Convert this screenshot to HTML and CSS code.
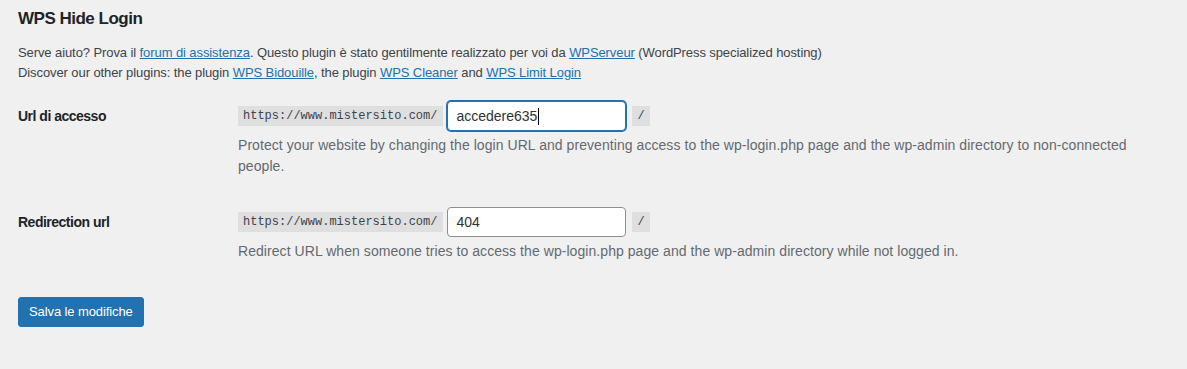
FILE: index.html
```html
<!DOCTYPE html>
<html>
<head>
    <title>WPS Hide Login</title>
    <link rel="stylesheet" href="styles.css">
</head>
<body>
    <div class="wrap">
        <h2>WPS Hide Login</h2>
        <p class="intro">
            Serve aiuto? Prova il <a href="#">forum di assistenza</a>. Questo plugin è stato gentilmente realizzato per voi da <a href="#">WPServeur</a> (WordPress specialized hosting)<br>
            Discover our other plugins: the plugin <a href="#">WPS Bidouille</a>, the plugin <a href="#">WPS Cleaner</a> and <a href="#">WPS Limit Login</a>
        </p>

        <table class="form-table">
            <tr>
                <th>Url di accesso</th>
                <td>
                    <div class="url-field">
                        <code>https://www.mistersito.com/</code>
                        <div class="text-input focused">accedere635<span class="caret"></span></div>
                        <code class="slash">/</code>
                    </div>
                    <p class="description">Protect your website by changing the login URL and preventing access to the wp-login.php page and the wp-admin directory to non-connected people.</p>
                </td>
            </tr>
            <tr>
                <th>Redirection url</th>
                <td>
                    <div class="url-field">
                        <code>https://www.mistersito.com/</code>
                        <div class="text-input">404</div>
                        <code class="slash">/</code>
                    </div>
                    <p class="description">Redirect URL when someone tries to access the wp-login.php page and the wp-admin directory while not logged in.</p>
                </td>
            </tr>
        </table>

        <p class="submit">
            <button class="button-primary">Salva le modifiche</button>
        </p>
    </div>
</body>
</html>
```
FILE: styles.css
```css
body {
    margin: 0;
    background: #f0f0f1;
    color: #3c434a;
    font-family: "Liberation Sans", Arial, sans-serif;
    font-size: 13px;
    line-height: 1.4;
}
.wrap {
    margin: 0 20px 0 18px;
    padding-top: 8px;
}
h2 {
    font-size: 17px;
    font-weight: 600;
    color: #1d2327;
    margin: 0;
    line-height: 22px;
    letter-spacing: -0.5px;
}
a {
    color: #2271b1;
}
.intro {
    margin: 13px 0 4px;
    line-height: 19.5px;
    letter-spacing: -0.09px;
}
.form-table {
    border-collapse: collapse;
    width: 100%;
}
.form-table th {
    width: 200px;
    text-align: left;
    vertical-align: top;
    padding: 21px 10px 20px 0;
    font-size: 14px;
    font-weight: 600;
    line-height: 1.3;
    letter-spacing: -0.5px;
    color: #1d2327;
}
.form-table td {
    padding: 15px 10px;
    vertical-align: top;
}
.url-field {
    display: flex;
    align-items: center;
}
code {
    font-family: "Liberation Mono", Consolas, monospace;
    font-size: 12px;
    background: rgba(0, 0, 0, 0.07);
    color: #3c434a;
    padding: 3px 6px 2px 5px;
    line-height: 15px;
}
.text-input {
    box-sizing: border-box;
    width: 179px;
    height: 30px;
    margin-left: 4px;
    padding: 0 8px;
    border: 1px solid #8c8f94;
    border-radius: 4px;
    background: #fff;
    color: #2c3338;
    font-size: 14px;
    line-height: 28px;
    display: flex;
    align-items: center;
}
.text-input.focused {
    border-color: #2271b1;
    box-shadow: 0 0 0 1px #2271b1;
}
.caret {
    display: inline-block;
    width: 1px;
    height: 17px;
    background: #000;
    margin-left: 1px;
}
.slash {
    margin-left: 6px;
    padding: 3px 5px 2px;
}
.description {
    margin: 4px 0 0;
    font-size: 14px;
    line-height: 21px;
    letter-spacing: 0.06px;
    color: #646970;
}
.submit {
    margin: 20px 0 0;
}
.button-primary {
    font-family: inherit;
    font-size: 13px;
    background: #2271b1;
    border: 1px solid #2271b1;
    color: #fff;
    border-radius: 3px;
    padding: 0 10px;
    height: 30px;
    line-height: 28px;
    letter-spacing: -0.1px;
    cursor: pointer;
}
```
